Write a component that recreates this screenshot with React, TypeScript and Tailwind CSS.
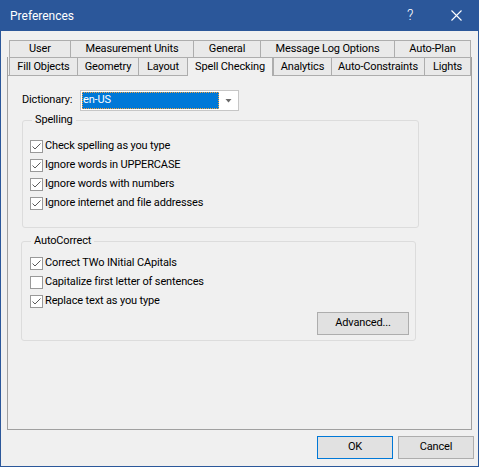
import React from 'react'

const rowOne = [
  { label: 'User', w: 'w-[61px]' },
  { label: 'Measurement Units', w: 'w-[123px]' },
  { label: 'General', w: 'w-[67px]' },
  { label: 'Message Log Options', w: 'w-[134px]' },
  { label: 'Auto-Plan', w: 'w-[77px]', last: true },
]

const rowTwo = [
  { label: 'Fill Objects', w: 'w-[68px]' },
  { label: 'Geometry', w: 'w-[61px]' },
  { label: 'Layout', w: 'w-[49px]' },
  { label: 'Spell Checking', w: 'w-[86px]', active: true },
  { label: 'Analytics', w: 'w-[58px]' },
  { label: 'Auto-Constraints', w: 'w-[93px]' },
  { label: 'Lights', w: 'w-[47px]', last: true },
]

const spelling = [
  { label: 'Check spelling as you type', on: true },
  { label: 'Ignore words in UPPERCASE', on: true },
  { label: 'Ignore words with numbers', on: true },
  { label: 'Ignore internet and file addresses', on: true },
]

const autoCorrect = [
  { label: 'Correct TWo INitial CApitals', on: true },
  { label: 'Capitalize first letter of sentences', on: false },
  { label: 'Replace text as you type', on: true },
]

function Check({ label, on }: { label: string; on: boolean }) {
  return (
    <div className="flex h-[19px] items-center gap-[2px]">
      <span className="flex h-[13px] w-[13px] items-center justify-center border border-[#999999] bg-white">
        {on && (
          <svg width="11" height="11" viewBox="0 0 11 11">
            <path d="M1.5 5.5 L4 8 L9.5 2.5" fill="none" stroke="#5a5a5a" strokeWidth="1" />
          </svg>
        )}
      </span>
      <span>{label}</span>
    </div>
  )
}

export default function App() {
  return (
    <div
      className="flex h-[467px] w-[479px] flex-col bg-[#f0f0f0] text-[11px] tracking-[-0.15px] text-black"
      style={{ fontFamily: 'Roboto, "Liberation Sans", sans-serif' }}
    >
      {/* Title bar */}
      <div className="flex h-[31px] shrink-0 items-center bg-[#2b579a] text-white">
        <span className="ml-[10px] flex-1 text-[12px] tracking-normal">Preferences</span>
        <span className="flex h-full w-[46px] items-center justify-center text-[14px] font-light">?</span>
        <span className="flex h-full w-[46px] items-center justify-center">
          <svg width="11" height="11" viewBox="0 0 11 11">
            <path d="M0.5 0.5 L10.5 10.5 M10.5 0.5 L0.5 10.5" stroke="white" strokeWidth="1.1" />
          </svg>
        </span>
      </div>

      <div className="flex flex-1 flex-col border-x border-b border-[#2b579a] pt-[9px]">
        {/* Tab control */}
        <div className="ml-[6px] w-[465px]">
          <div className="ml-[2px] flex h-[17px]">
            {rowOne.map((t) => (
              <div
                key={t.label}
                className={`flex ${t.w} items-center justify-center border-l border-t border-[#adadad] bg-[#e9e9e9] ${
                  t.last ? 'border-r' : ''
                }`}
              >
                {t.label}
              </div>
            ))}
          </div>
          <div className="flex h-[373px] flex-col border-x border-b border-[#a0a0a0]">
            <div className="ml-px flex h-[18px] shrink-0">
              {rowTwo.map((t) => (
                <div
                  key={t.label}
                  className={`flex ${t.w} justify-center border-l border-t border-[#adadad] ${
                    t.last ? 'border-r' : ''
                  } ${
                    t.active
                      ? 'relative z-10 h-[19px] items-end border-r bg-[#f0f0f0] pb-[1px]'
                      : 'h-[18px] items-center bg-[#e9e9e9] pt-px'
                  }`}
                >
                  {t.label}
                </div>
              ))}
            </div>

            {/* Panel */}
            <div className="flex flex-1 flex-col border-t border-[#adadad] pl-[14px]">
              <div className="mt-[14px] flex h-[21px] items-center">
                <span className="w-[58px]">Dictionary:</span>
                <div className="flex h-[21px] w-[159px] border border-[#c6c6c6] bg-white p-px">
                  <div className="flex flex-1 items-center border border-dotted border-[#f2a341] bg-[#0078d7] text-white">
                    en-US
                  </div>
                  <div className="flex w-[18px] items-center justify-center">
                    <svg width="7" height="4" viewBox="0 0 7 4">
                      <path d="M0.5 0 H6.5 L3.5 3.5 Z" fill="#6a6a6a" />
                    </svg>
                  </div>
                </div>
              </div>

              <fieldset className="mt-px w-[397px] rounded-[3px] border border-[#dcdcdc] pb-[14px] pl-[7px]">
                <legend className="ml-[2px] px-[3px] leading-[16px]">Spelling</legend>
                <div className="pt-[9px]">
                  {spelling.map((c) => (
                    <Check key={c.label} {...c} />
                  ))}
                </div>
              </fieldset>

              <fieldset className="-ml-px mt-[5px] w-[395px] rounded-[3px] border border-[#dcdcdc] pb-[5px] pl-[8px] pr-[6px]">
                <legend className="ml-[1px] px-[3px] leading-[16px]">AutoCorrect</legend>
                <div className="pt-[5px]">
                  {autoCorrect.map((c) => (
                    <Check key={c.label} {...c} />
                  ))}
                </div>
                <div className="mt-px flex justify-end">
                  <button className="h-[23px] w-[92px] border border-[#adadad] bg-[#e1e1e1]">Advanced...</button>
                </div>
              </fieldset>
            </div>
          </div>
        </div>

        {/* Dialog buttons */}
        <div className="mr-[4px] mt-[6px] flex justify-end gap-[5px]">
          <button className="h-[23px] w-[76px] border border-[#0078d7] bg-[#e1e1e1]">OK</button>
          <button className="h-[23px] w-[76px] border border-[#adadad] bg-[#e1e1e1]">Cancel</button>
        </div>
      </div>
    </div>
  )
}
